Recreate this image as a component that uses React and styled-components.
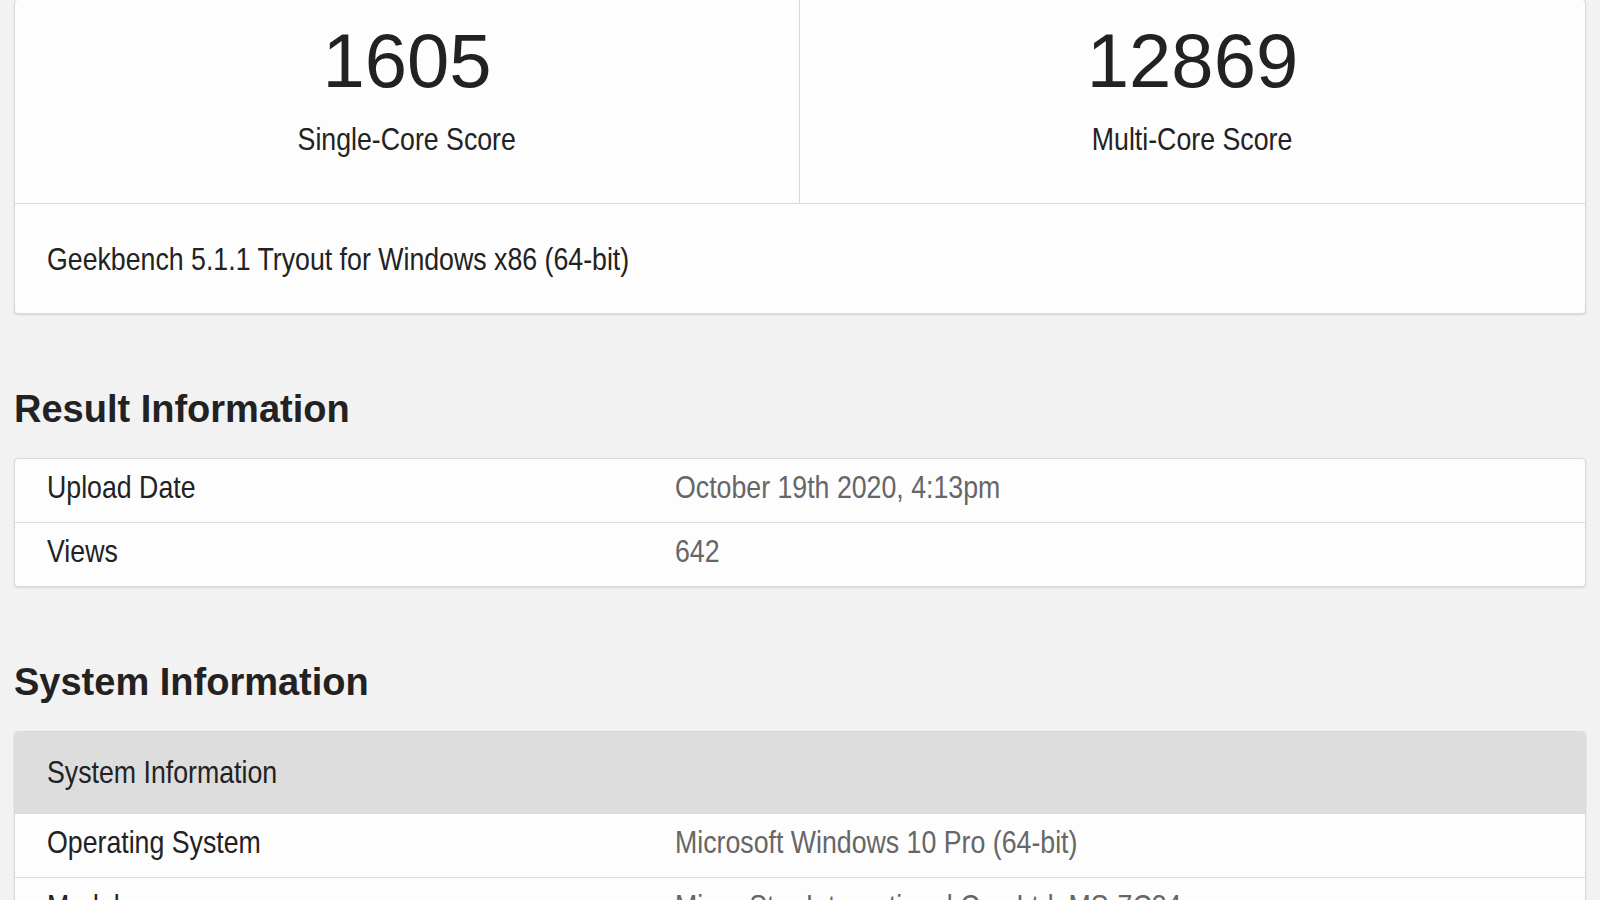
import React from "react";
import styled, { createGlobalStyle } from "styled-components";

const Global = createGlobalStyle`
  html, body { margin: 0; padding: 0; background: #f2f2f2; }
  body { font-family: "Liberation Sans", Arial, sans-serif; color: #222; }
  * { box-sizing: border-box; }
`;

const Page = styled.div`
  padding: 0 14px 40px;
  width: 1600px;
  overflow: hidden;
`;

const Card = styled.div`
  background: #fdfdfd;
  border: 1px solid #d9d9d9;
  border-radius: 4px;
  box-shadow: 0 1px 2px rgba(0, 0, 0, 0.12);
  overflow: hidden;
  margin-top: ${(p) => (p.$clipped ? "-1px" : "0")};
`;

/* narrow sans face: the page's body text is a condensed Arial-like font */
const Narrow = styled.span`
  display: inline-block;
  white-space: nowrap;
  transform: scaleX(0.835);
  transform-origin: ${(p) => (p.$center ? "center" : "left")} center;
`;

const Scores = styled.div`
  display: grid;
  grid-template-columns: 1fr 1fr;
  border-bottom: 1px solid #d9d9d9;
`;

const ScoreCell = styled.div`
  display: flex;
  flex-direction: column;
  align-items: center;
  padding: 23px 0 46px;
  border-right: ${(p) => (p.$divider ? "1px solid #d9d9d9" : "none")};
`;

const ScoreValue = styled.div`
  font-size: 76px;
  line-height: 76px;
  color: #222;
`;

const ScoreLabel = styled.div`
  margin-top: 22px;
  font-size: 32px;
  line-height: 36px;
  color: #222;
`;

const CardFooter = styled.div`
  padding: 37px 32px 36px;
  font-size: 32px;
  line-height: 36px;
  color: #222;
`;

const Heading = styled.h2`
  margin: 73px 0 27px;
  font-weight: bold;
  font-size: 38px;
  line-height: 44px;
  color: #222;
`;

const Row = styled.div`
  display: grid;
  grid-template-columns: 40% 60%;
  background: ${(p) => (p.$head ? "#dddddd" : "transparent")};
  & + & {
    border-top: 1px solid #dcdcdc;
  }
`;

const Cell = styled.div`
  padding: ${(p) => (p.$head ? "22px 32px 23px" : "10px 32px 17px")};
  font-size: 32px;
  line-height: 36px;
  min-height: ${(p) => (p.$head ? "81px" : "0")};
  color: ${(p) => (p.$value ? "#666" : "#222")};
  white-space: nowrap;
`;

const resultRows = [
  ["Upload Date", "October 19th 2020, 4:13pm"],
  ["Views", "642"],
];

const systemRows = [
  ["Operating System", "Microsoft Windows 10 Pro (64-bit)"],
  ["Model", "Micro-Star International Co., Ltd. MS-7C34"],
];

export default function App() {
  return (
    <>
      <Global />
      <Page>
        <Card $clipped>
          <Scores>
            <ScoreCell $divider>
              <ScoreValue>1605</ScoreValue>
              <ScoreLabel>
                <Narrow $center>Single-Core Score</Narrow>
              </ScoreLabel>
            </ScoreCell>
            <ScoreCell>
              <ScoreValue>12869</ScoreValue>
              <ScoreLabel>
                <Narrow $center>Multi-Core Score</Narrow>
              </ScoreLabel>
            </ScoreCell>
          </Scores>
          <CardFooter>
            <Narrow>Geekbench 5.1.1 Tryout for Windows x86 (64-bit)</Narrow>
          </CardFooter>
        </Card>

        <Heading>Result Information</Heading>
        <Card>
          {resultRows.map(([k, v]) => (
            <Row key={k}>
              <Cell>
                <Narrow>{k}</Narrow>
              </Cell>
              <Cell $value>
                <Narrow>{v}</Narrow>
              </Cell>
            </Row>
          ))}
        </Card>

        <Heading>System Information</Heading>
        <Card>
          <Row $head>
            <Cell $head>
              <Narrow>System Information</Narrow>
            </Cell>
            <Cell $head />
          </Row>
          {systemRows.map(([k, v]) => (
            <Row key={k}>
              <Cell>
                <Narrow>{k}</Narrow>
              </Cell>
              <Cell $value>
                <Narrow>{v}</Narrow>
              </Cell>
            </Row>
          ))}
        </Card>
      </Page>
    </>
  );
}
